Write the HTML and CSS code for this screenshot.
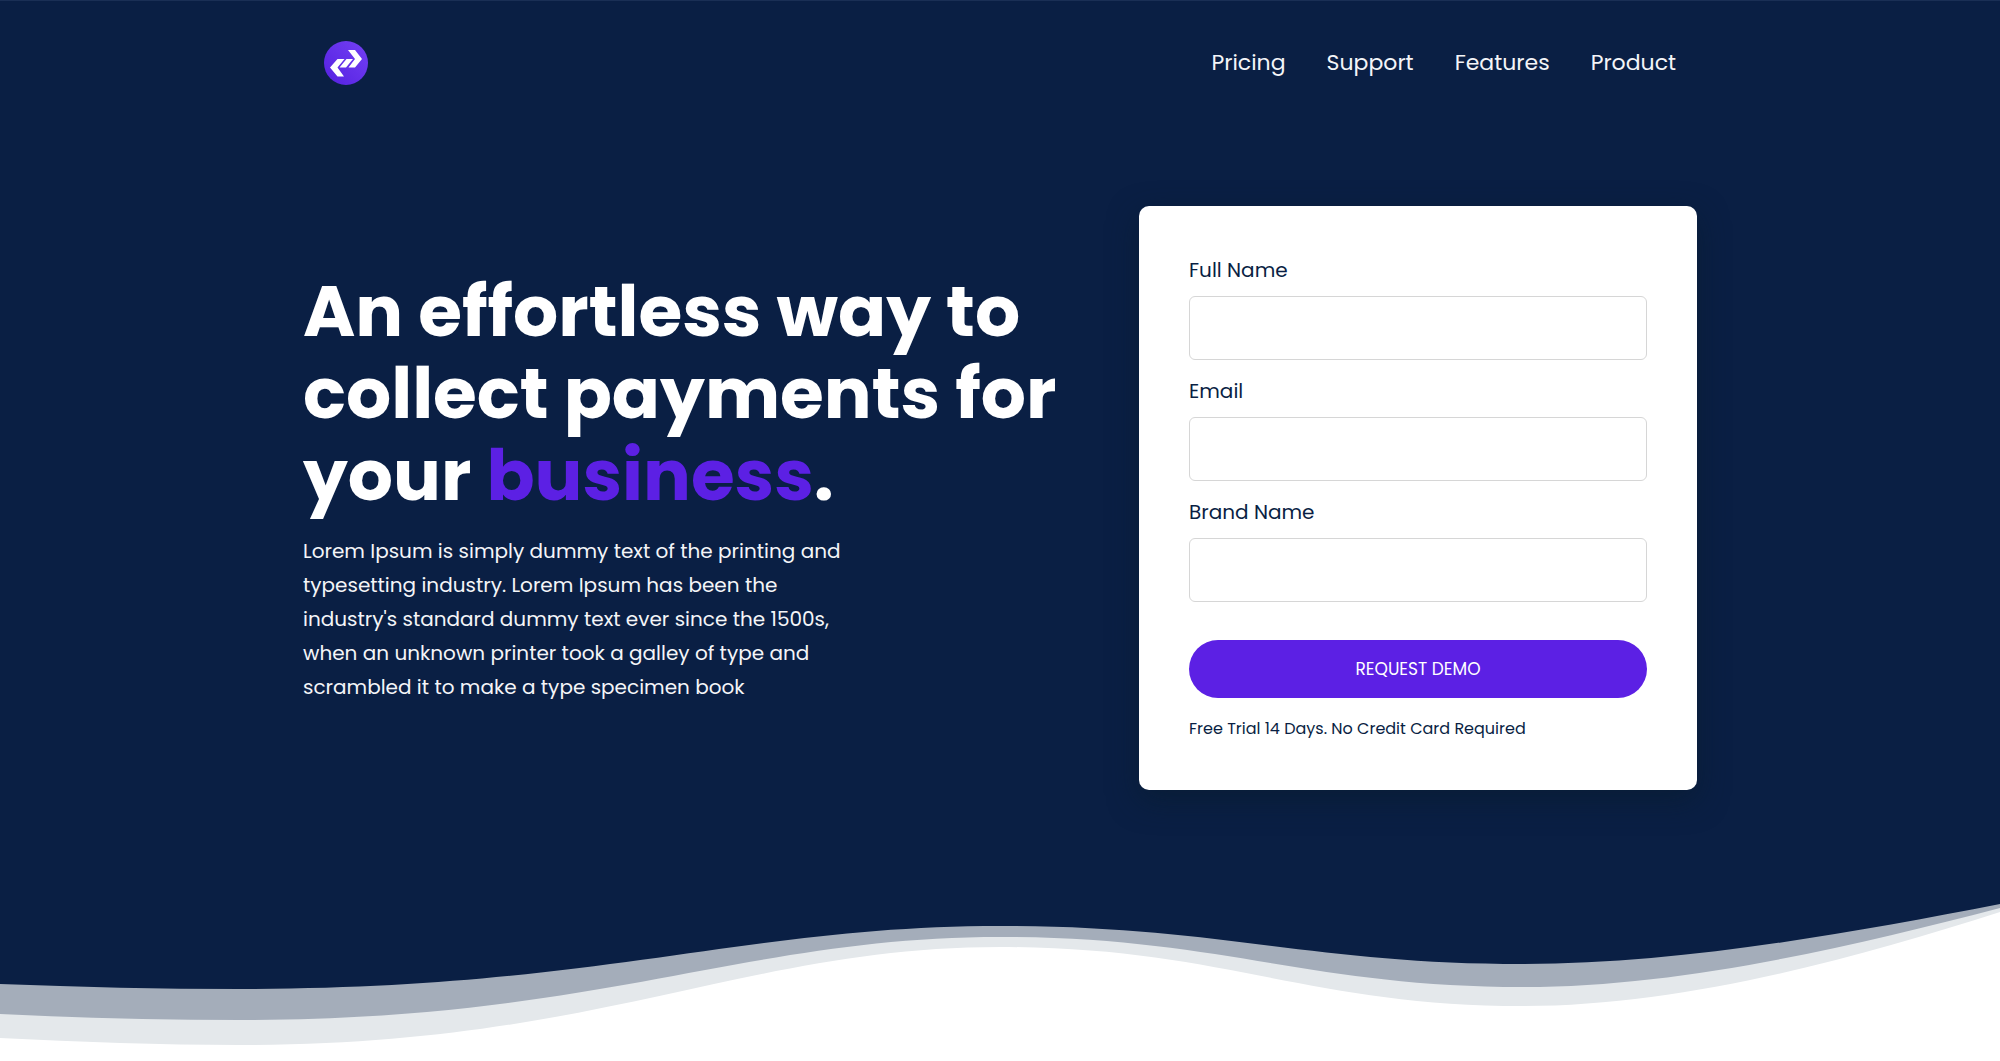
FILE: index.html
```html
<!DOCTYPE html>
<html lang="en">
<head>
<meta charset="utf-8">
<meta name="viewport" content="width=device-width, initial-scale=1">
<title>Collect payments</title>
<link rel="stylesheet" href="styles.css">
</head>
<body>
<div class="hero">
  <header class="container header">
    <a class="logo" href="#" aria-label="Home">
      <svg viewBox="0 0 44 44" width="44" height="44" aria-hidden="true">
        <defs>
          <linearGradient id="disc" x1="0" y1="1" x2="1" y2="0">
            <stop offset="0" stop-color="#5420e0"/>
            <stop offset="1" stop-color="#7440f4"/>
          </linearGradient>
        </defs>
        <circle cx="22" cy="22" r="22" fill="url(#disc)"/>
        <path fill="#fff" d="M24 9H31L38 18L31 26.500H24.500L31 18Z"/>
        <path fill="#fff" d="M20 35.500H13.500L6 26.500L13.500 18H20.500L13.500 26.500Z"/>
        <path fill="#fff" d="M22.500 18H29L22 26.500H15.500Z"/>
      </svg>
    </a>
    <nav class="nav">
      <a href="#">Pricing</a>
      <a href="#">Support</a>
      <a href="#">Features</a>
      <a href="#">Product</a>
    </nav>
  </header>
  <main class="container main">
    <section class="intro">
      <h1>An effortless way to collect payments for your <span class="accent">business</span>.</h1>
      <p>Lorem Ipsum is simply dummy text of the printing and typesetting industry. Lorem Ipsum has been the industry's standard dummy text ever since the 1500s, when an unknown printer took a galley of type and scrambled it to make a type specimen book</p>
    </section>
    <form class="card">
      <label for="name">Full Name</label>
      <input id="name" type="text">
      <label for="email">Email</label>
      <input id="email" type="email">
      <label for="brand">Brand Name</label>
      <input id="brand" type="text">
      <button type="button">REQUEST DEMO</button>
      <p class="note">Free Trial 14 Days. No Credit Card Required</p>
    </form>
  </main>
</div>
<svg class="wave" viewBox="0 880 2000 181" preserveAspectRatio="none" aria-hidden="true">
  <path fill="#e4e8eb" d="M0 880V1038C80 1042 160 1045 240 1045C600 1045 745 947 1000 947C1220 947 1310 1006 1523 1006C1680 1006 1850 960 2000 912V880Z"/>
  <path fill="#a4adba" d="M0 880V1014C80 1018 160 1020 240 1020C600 1020 745 937 1000 937C1220 937 1310 987 1523 987C1680 987 1850 947 2000 908V880Z"/>
  <path fill="#0a1f44" d="M0 880V984C80 987 160 989 240 989C600 989 745 926 1000 926C1220 926 1310 964 1523 964C1680 964 1850 933 2000 904V880Z"/>
</svg>
</body>
</html>
```
FILE: styles.css
```css
* {
  box-sizing: border-box;
}

body {
  margin: 0;
  background: #fff;
  color: #0a1f44;
  font-family: Poppins, Inter, sans-serif;
}

.hero {
  background: #0a1f44;
  border-top: 1px solid #1a2f55;
  padding-bottom: 90px;
}

.container {
  width: min(1394px, 100% - 48px);
  margin: 0 auto;
}

.header {
  display: flex;
  align-items: center;
  justify-content: space-between;
  height: 124px;
  padding: 0 21px;
}

.logo,
.logo svg {
  display: block;
}

.nav {
  display: flex;
  gap: 41px;
}

.nav a {
  color: #f4f5f8;
  font-size: 22px;
  line-height: 32px;
  text-decoration: none;
}

.main {
  display: grid;
  grid-template-columns: 1fr 558px;
  gap: 64px;
  align-items: center;
  padding-top: 81px;
}

.intro {
  padding-bottom: 22px;
  color: #fff;
}

.intro h1 {
  margin: 0 0 18px;
  font-size: 71px;
  line-height: 82px;
  font-weight: 700;
}

.accent {
  color: #5c20e4;
}

.intro p {
  max-width: 560px;
  margin: 0;
  color: #f4f5f8;
  font-size: 20px;
  line-height: 34px;
}

.card {
  display: flex;
  flex-direction: column;
  padding: 49px 50px 48px;
  border-radius: 10px;
  background: #fff;
  box-shadow: 0 10px 30px rgba(8, 28, 48, 0.7);
}

.card label {
  margin-bottom: 11px;
  font-size: 20px;
  line-height: 30px;
}

.card input {
  height: 64px;
  margin-bottom: 16px;
  padding: 0 16px;
  border: 1px solid #d6d6d6;
  border-radius: 6px;
  font: inherit;
  font-size: 20px;
}

.card button {
  height: 58px;
  margin: 22px 0 18px;
  border: 0;
  border-radius: 29px;
  background: #5c20e4;
  color: #fff;
  font: inherit;
  font-size: 17px;
}

.note {
  margin: 0;
  font-size: 16px;
  line-height: 26px;
}

.wave {
  display: block;
  width: 100%;
  height: 181px;
}

@media (max-width: 1200px) {
  .main {
    grid-template-columns: 1fr;
  }
}
```
